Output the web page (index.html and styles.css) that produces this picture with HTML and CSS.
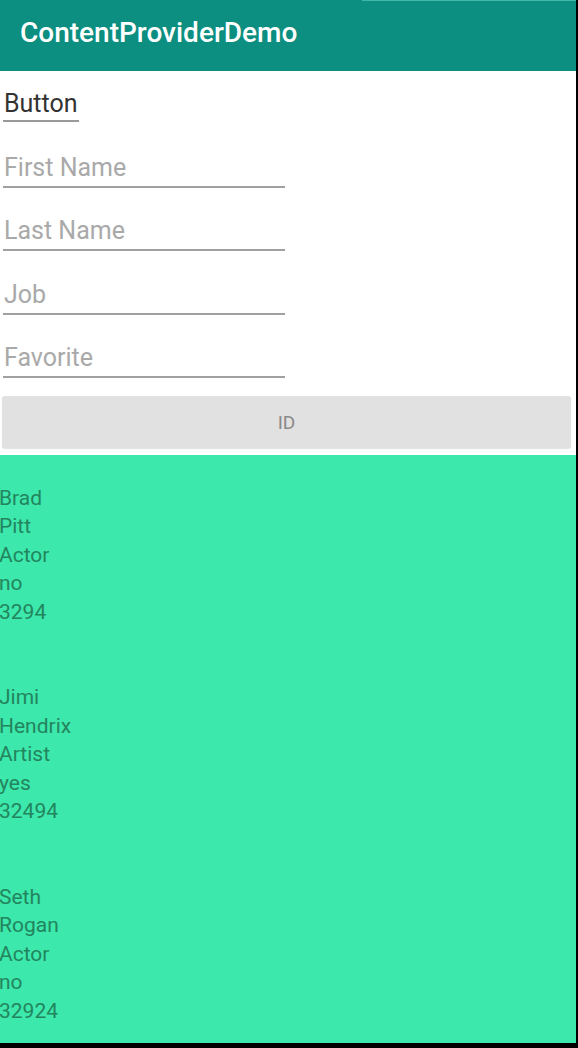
FILE: index.html
```html
<!DOCTYPE html>
<html>
<head>
<meta charset="utf-8">
<link rel="stylesheet" href="styles.css">
</head>
<body>
<div class="screen">
  <div class="statusline"></div>
  <header class="appbar"><span class="title">ContentProviderDemo</span></header>
  <main class="form">
    <div class="btn-text"><span>Button</span></div>
    <div class="field"><span class="hint">First Name</span></div>
    <div class="field"><span class="hint">Last Name</span></div>
    <div class="field"><span class="hint">Job</span></div>
    <div class="field"><span class="hint">Favorite</span></div>
    <div class="id-btn">ID</div>
  </main>
  <section class="list">
    <div class="line"></div>
    <div class="line">Brad</div>
    <div class="line">Pitt</div>
    <div class="line">Actor</div>
    <div class="line">no</div>
    <div class="line">3294</div>
    <div class="line"></div>
    <div class="line"></div>
    <div class="line">Jimi</div>
    <div class="line">Hendrix</div>
    <div class="line">Artist</div>
    <div class="line">yes</div>
    <div class="line">32494</div>
    <div class="line"></div>
    <div class="line"></div>
    <div class="line">Seth</div>
    <div class="line">Rogan</div>
    <div class="line">Actor</div>
    <div class="line">no</div>
    <div class="line">32924</div>
  </section>
</div>
</body>
</html>
```
FILE: styles.css
```css
html, body {
  margin: 0;
  padding: 0;
  background: #000;
}
.screen {
  position: relative;
  width: 576px;
  height: 1043px;
  background: #fff;
  display: flex;
  flex-direction: column;
  font-family: Roboto, "Liberation Sans", sans-serif;
  overflow: hidden;
}
.statusline {
  position: absolute;
  top: 0;
  left: 362px;
  width: 214px;
  height: 1px;
  background: #3fb8a8;
}
.appbar {
  height: 71px;
  flex: none;
  background: #0c8f80;
  display: flex;
  align-items: center;
  padding-left: 20px;
  box-sizing: border-box;
}
.title {
  color: #fff;
  font-size: 28px;
  font-weight: 500;
  position: relative;
  top: -3px;
}
.form {
  flex: none;
  height: 384px;
  display: flex;
  flex-direction: column;
  padding-top: 15px;
  box-sizing: border-box;
}
.btn-text {
  padding-left: 3px;
  height: 38px;
  box-sizing: border-box;
}
.btn-text span {
  display: inline-block;
  font-size: 25px;
  color: #333;
  padding: 1px 1px 0 1px;
  line-height: 33px;
  border-bottom: 2px solid #999;
}
.field {
  margin-left: 3px;
  width: 282px;
  height: 63.5px;
  box-sizing: border-box;
  border-bottom: 2px solid #a0a0a0;
  display: flex;
  align-items: flex-end;
}
.hint {
  font-size: 25px;
  color: #a9a9a9;
  padding-left: 1px;
  line-height: 30px;
  margin-bottom: 3px;
}
.id-btn {
  margin: 18px 5px 0 2px;
  height: 52px;
  background: #e0e1e0;
  border-radius: 3px;
  box-shadow: 0 1px 1px rgba(0,0,0,0.12);
  color: #8a8a8a;
  font-size: 19px;
  display: flex;
  align-items: center;
  justify-content: center;
}
.list {
  flex: 1;
  background: #3ce8ab;
  color: #23855e;
  font-size: 21px;
  margin-left: -1px;
}
.line {
  height: 28.5px;
  line-height: 28.5px;
}
```
